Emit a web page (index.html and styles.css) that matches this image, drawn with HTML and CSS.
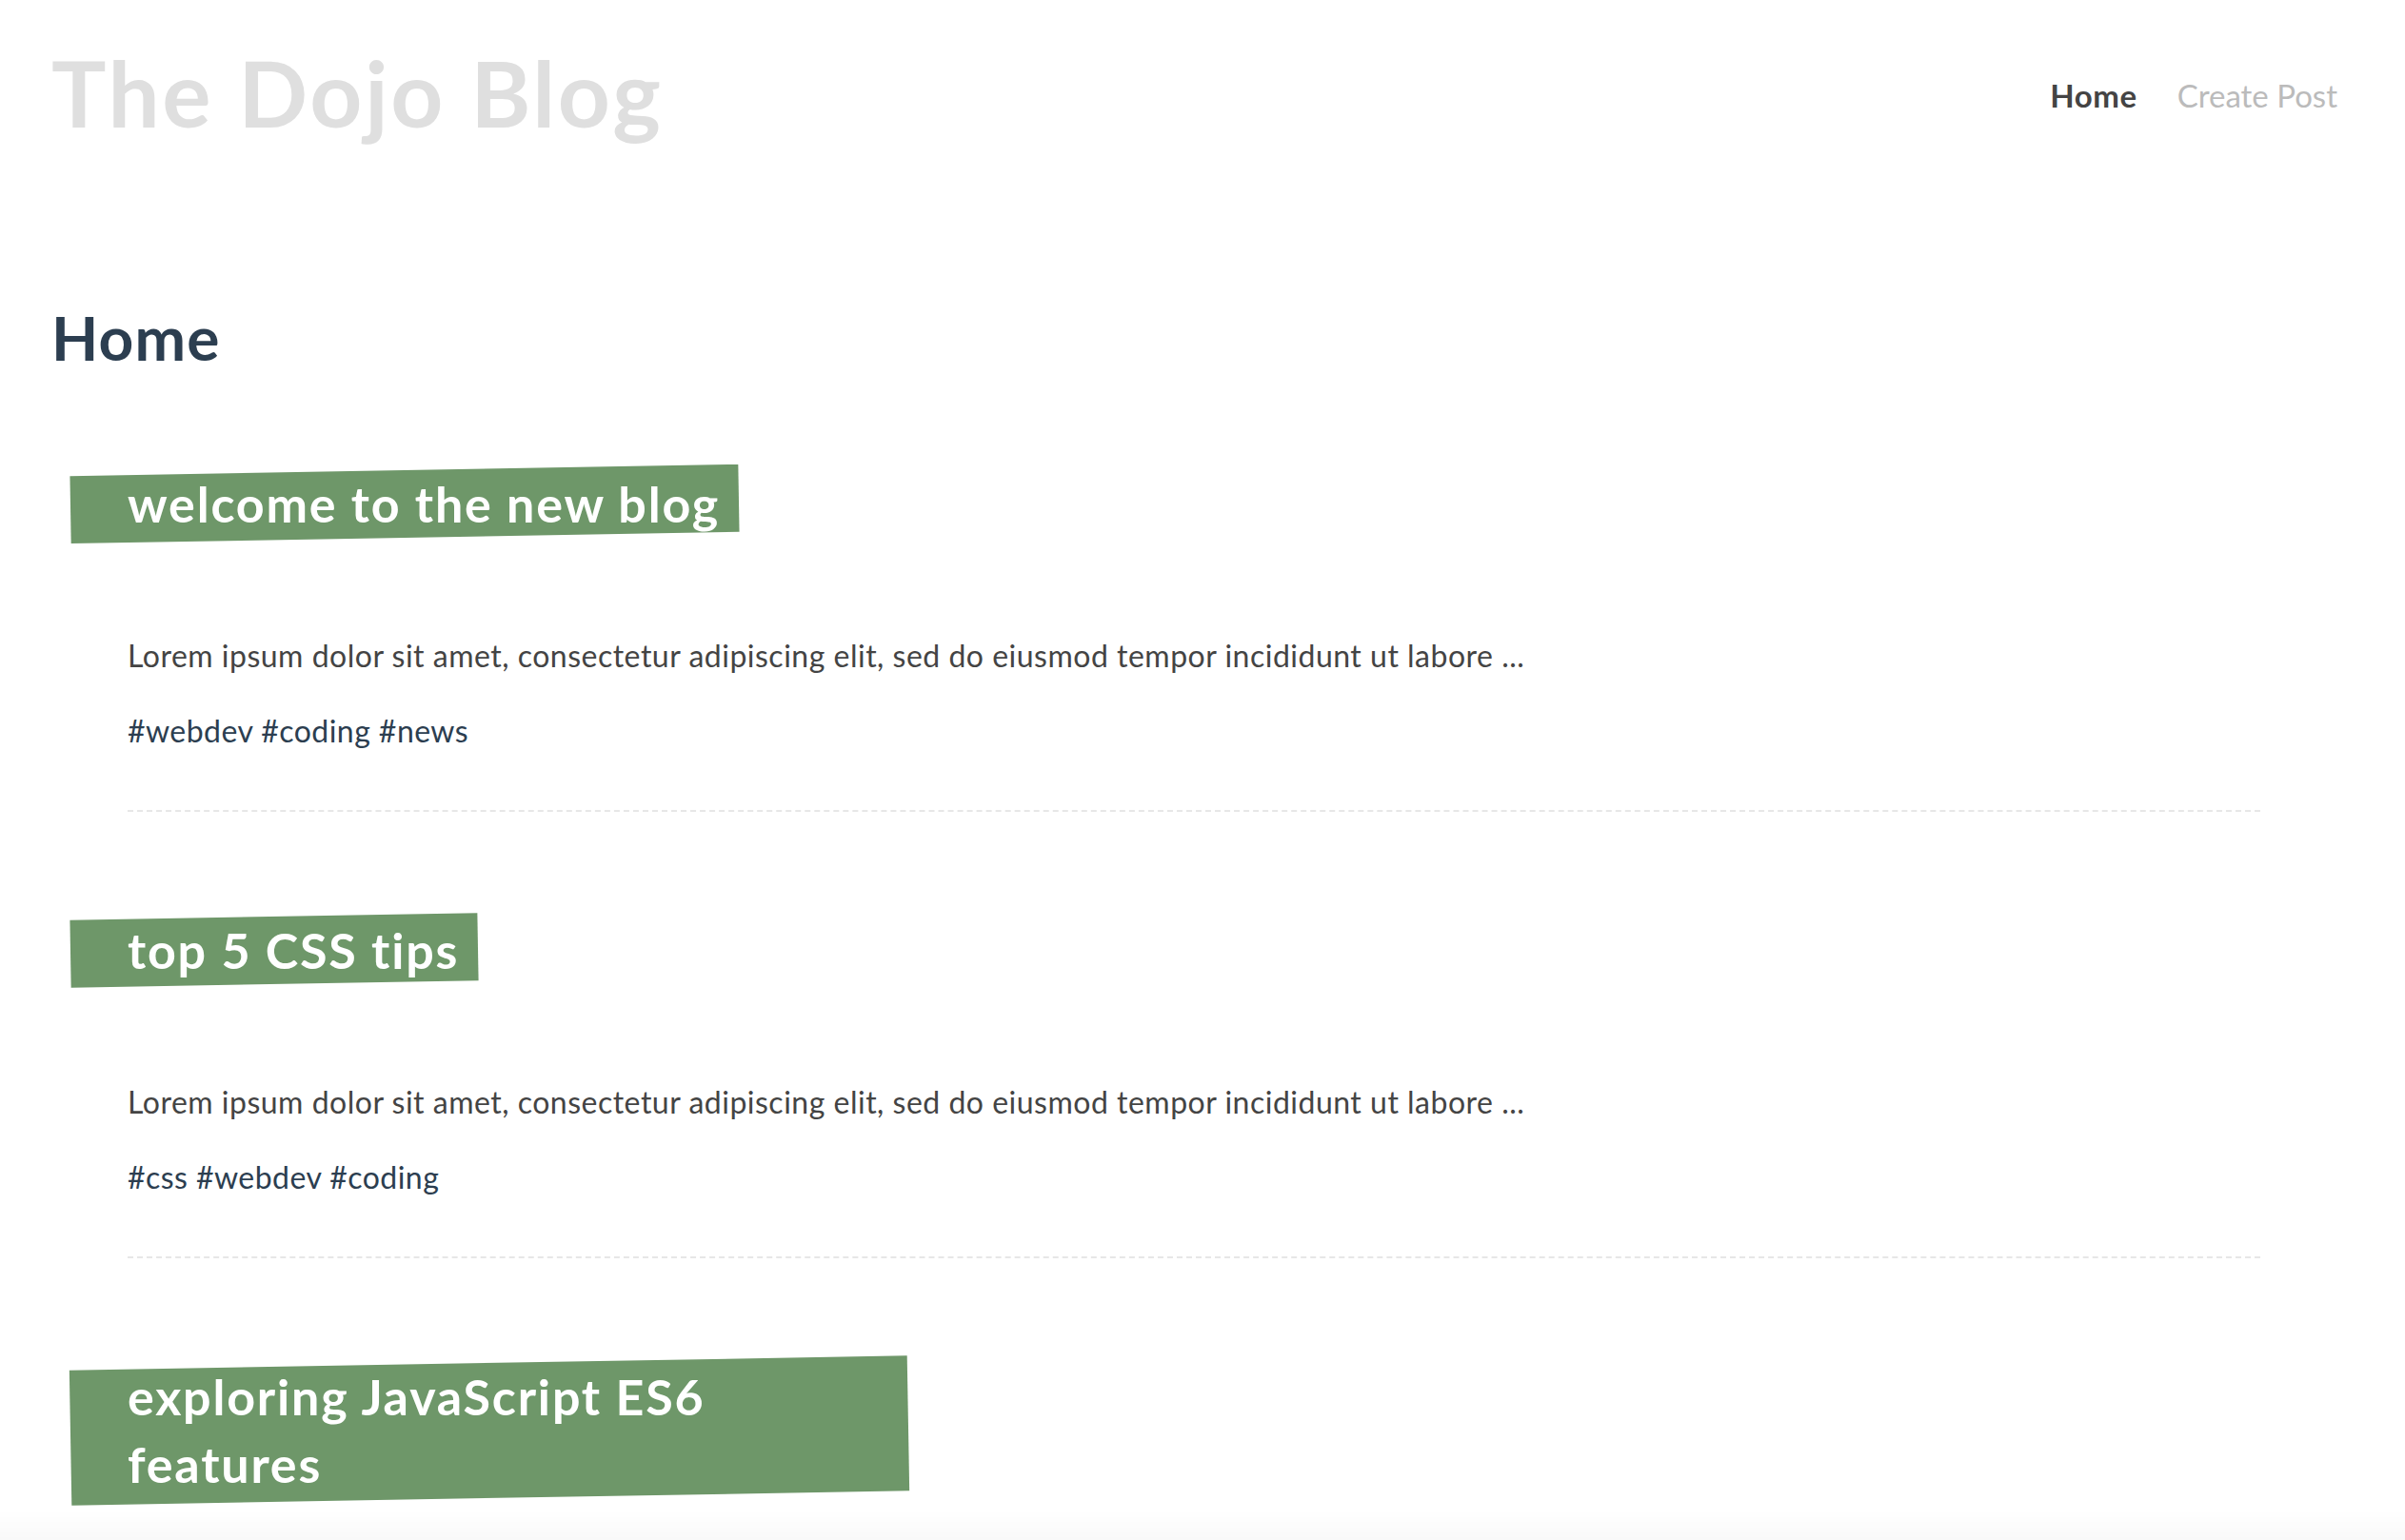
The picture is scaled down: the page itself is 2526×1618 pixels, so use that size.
FILE: index.html
```html
<!DOCTYPE html>
<html lang="en">
<head>
<meta charset="utf-8">
<title>The Dojo Blog</title>
<link rel="stylesheet" href="styles.css">
</head>
<body>
<div class="app">
  <header class="site-header">
    <h1 class="logo">The Dojo Blog</h1>
    <nav class="nav">
      <a class="nav-link active" href="#">Home</a>
      <a class="nav-link" href="#">Create Post</a>
    </nav>
  </header>
  <main class="home">
    <h2 class="page-title">Home</h2>
    <div class="post-list">
      <article class="post">
        <h3 class="post-title">welcome to the new blog</h3>
        <p class="post-body">Lorem ipsum dolor sit amet, consectetur adipiscing elit, sed do eiusmod tempor incididunt ut labore ...</p>
        <p class="post-tags">#webdev #coding #news</p>
      </article>
      <article class="post">
        <h3 class="post-title">top 5 CSS tips</h3>
        <p class="post-body">Lorem ipsum dolor sit amet, consectetur adipiscing elit, sed do eiusmod tempor incididunt ut labore ...</p>
        <p class="post-tags">#css #webdev #coding</p>
      </article>
      <article class="post">
        <h3 class="post-title">exploring JavaScript ES6 features</h3>
      </article>
    </div>
  </main>
</div>
<div class="bottom-fade"></div>
</body>
</html>
```

FILE: styles.css
```css
html, body {
  margin: 0;
  padding: 0;
  background: #ffffff;
}

body {
  font-family: "Lato", "Liberation Sans", sans-serif;
  color: #2c3e50;
  overflow: hidden;
  height: 1618px;
}

.app {
  padding: 0 71px 0 54px;
}

.site-header {
  display: flex;
  justify-content: space-between;
  align-items: flex-start;
  padding-top: 39px;
}

.logo {
  margin: 0;
  font-size: 96px;
  line-height: 115px;
  font-weight: 700;
  letter-spacing: 2.7px;
  color: #dfdfdf;
}

.nav {
  display: flex;
  margin-top: 41px;
}

.nav-link {
  font-size: 33px;
  line-height: 40px;
  color: #bbbbbb;
  text-decoration: none;
  margin-left: 42px;
}

.nav-link.active {
  color: #444444;
  font-weight: 700;
  letter-spacing: 0.6px;
}

.page-title {
  margin: 162px 0 0;
  font-size: 64px;
  line-height: 77px;
  font-weight: 700;
  letter-spacing: 1.2px;
  color: #2c3e50;
}

.post-list {
  margin-top: 101px;
}

.post {
  position: relative;
  z-index: 0;
  margin: 0 81px 110px 80px;
  padding-bottom: 61px;
  border-bottom: 2px dashed #e7e7e7;
}

.post-title {
  position: relative;
  display: block;
  width: fit-content;
  max-width: 800px;
  margin: 0;
  font-size: 52px;
  line-height: 71px;
  font-weight: 700;
  letter-spacing: 1.8px;
  color: #ffffff;
}

.post-title::before {
  content: "";
  position: absolute;
  top: 0;
  left: -60px;
  width: 100%;
  height: 100%;
  padding-right: 80px;
  background: #6e9769;
  transform: rotate(-1deg);
  z-index: -1;
}

.post-body {
  margin: 102px 0 0;
  font-size: 32px;
  line-height: 44px;
  letter-spacing: 0.5px;
  color: #444444;
}

.post-tags {
  margin: 35px 0 0;
  font-size: 32px;
  line-height: 44px;
  letter-spacing: 0.45px;
  color: #2c3e50;
}

.bottom-fade {
  position: fixed;
  left: 0;
  right: 0;
  bottom: 0;
  height: 32px;
  background: linear-gradient(to bottom, rgba(0, 0, 0, 0), rgba(0, 0, 0, 0.025));
  pointer-events: none;
}
```
